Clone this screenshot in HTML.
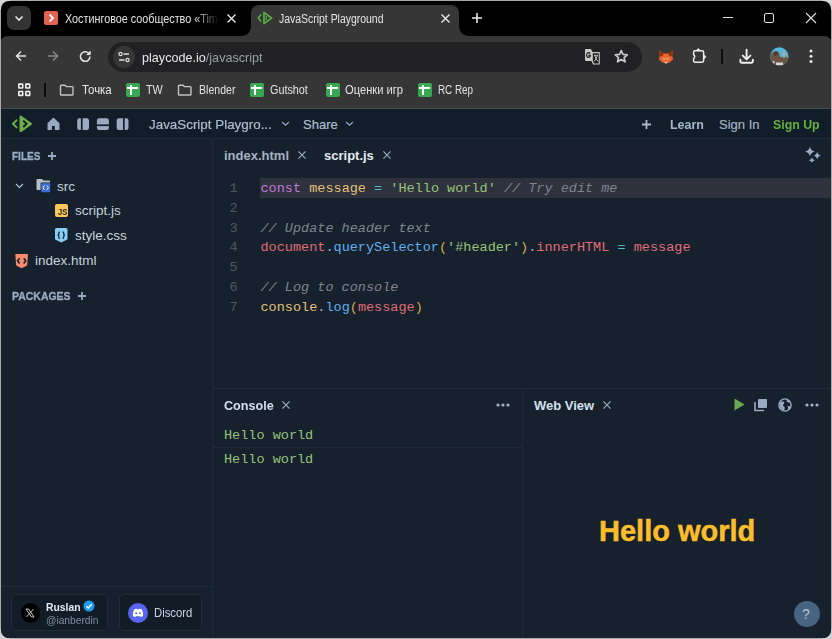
<!DOCTYPE html>
<html><head><meta charset="utf-8">
<style>
*{margin:0;padding:0;box-sizing:border-box}
html,body{width:832px;height:639px;overflow:hidden;background:#a9a9a9;font-family:"Liberation Sans",sans-serif}
.a{position:absolute}
#win{position:absolute;left:0;top:0;width:832px;height:639px;clip-path:inset(1px 1px 1px 1px round 8px);background:#000}
.t{position:absolute;white-space:nowrap;line-height:1}
svg{position:absolute;overflow:visible}
</style></head><body>
<div class="a" style="left:0;top:0;width:10px;height:10px;background:#d6d6d6"></div><div class="a" style="right:0;top:0;width:10px;height:10px;background:#d6d6d6"></div><div class="a" style="left:0;bottom:0;width:10px;height:10px;background:#d0d0d0"></div><div class="a" style="right:0;bottom:0;width:10px;height:10px;background:#d0d0d0"></div>
<div id="win">
  <!-- TAB STRIP -->
  <div class="a" style="left:7px;top:6px;width:24px;height:24px;border-radius:7px;background:#333"></div>
  <svg style="left:14px;top:14px" width="10" height="8" viewBox="0 0 10 8"><path d="M1.5 2.5 L5 6 L8.5 2.5" fill="none" stroke="#e8e8e8" stroke-width="1.6"/></svg>
  <!-- tab 1 -->
  <div class="a" style="left:44px;top:11px;width:14px;height:14px;background:#e2624f;border-radius:2px"></div>
  <svg style="left:44px;top:11px" width="14" height="14" viewBox="0 0 14 14"><path d="M5.5 3.5 L9 7 L5.5 10.5" fill="none" stroke="#fff" stroke-width="1.8"/></svg>
  <div class="a" style="left:65px;top:10px;width:154px;height:18px;overflow:hidden;-webkit-mask-image:linear-gradient(90deg,#000 84%,transparent)"><div class="t" style="left:0;top:3px;font-size:12px;color:#e3e3e3;transform:scaleX(.9);transform-origin:0 0">Хостинговое сообщество «Timeweb»</div></div>
  <svg style="left:227px;top:14px" width="9" height="9" viewBox="0 0 9 9"><path d="M0.5 0.5 L8.5 8.5 M8.5 0.5 L0.5 8.5" stroke="#e8e8e8" stroke-width="1.4"/></svg>
  <!-- active tab -->
  <div class="a" style="left:251px;top:5px;width:208px;height:32px;background:#363636;border-radius:8px 8px 0 0"></div>
  <div class="a" style="left:242px;top:27px;width:9px;height:9px;background:radial-gradient(circle at 0 0,#000 8.5px,#363636 9px)"></div>
  <div class="a" style="left:459px;top:27px;width:9px;height:9px;background:radial-gradient(circle at 100% 0,#000 8.5px,#363636 9px)"></div>
  <svg style="left:257px;top:11px" width="16" height="14" viewBox="0 0 16 14"><path d="M4.2 3.5 L1.2 7 L4.2 10.5" fill="none" stroke="#5aa845" stroke-width="1.7"/><path d="M7 1.5 L7 12.5 L14.5 7 Z" fill="none" stroke="#5aa845" stroke-width="1.8" stroke-linejoin="round"/><path d="M9.5 5 L9 9" stroke="#5aa845" stroke-width="1.2"/></svg>
  <div class="t" style="left:279px;top:13px;font-size:12px;color:#e3e3e3;transform:scaleX(.87);transform-origin:0 0">JavaScript Playground</div>
  <svg style="left:441px;top:14px" width="9" height="9" viewBox="0 0 9 9"><path d="M0.5 0.5 L8.5 8.5 M8.5 0.5 L0.5 8.5" stroke="#e8e8e8" stroke-width="1.4"/></svg>
  <svg style="left:471px;top:12px" width="12" height="12" viewBox="0 0 12 12"><path d="M6 1 V11 M1 6 H11" stroke="#e8e8e8" stroke-width="1.6"/></svg>
  <!-- window controls -->
  <div class="a" style="left:723px;top:17px;width:10px;height:1px;background:#e0e0e0"></div>
  <div class="a" style="left:764px;top:13px;width:10px;height:10px;border:1px solid #e0e0e0;border-radius:2px"></div>
  <svg style="left:806px;top:13px" width="10" height="10" viewBox="0 0 10 10"><path d="M0 0 L10 10 M10 0 L0 10" stroke="#e0e0e0" stroke-width="1.1"/></svg>

  <!-- TOOLBAR -->
  <div class="a" style="left:0;top:36px;width:832px;height:72px;background:#363636;border-radius:8px 8px 0 0"></div>
  <svg style="left:15px;top:50px" width="12" height="12" viewBox="0 0 12 12"><path d="M11 6 H1.5 M6 1.5 L1.5 6 L6 10.5" fill="none" stroke="#e3e3e3" stroke-width="1.5"/></svg>
  <svg style="left:47px;top:50px" width="12" height="12" viewBox="0 0 12 12"><path d="M1 6 H10.5 M6 1.5 L10.5 6 L6 10.5" fill="none" stroke="#8a8a8a" stroke-width="1.5"/></svg>
  <svg style="left:79px;top:50px" width="13" height="13" viewBox="0 0 13 13"><path d="M11 6.5 A4.8 4.8 0 1 1 9.5 3" fill="none" stroke="#e3e3e3" stroke-width="1.6"/><path d="M11.2 1 V4.6 H7.6" fill="#e3e3e3" stroke="#e3e3e3" stroke-width="1"/></svg>
  <div class="a" style="left:108px;top:42px;width:534px;height:30px;border-radius:15px;background:#212124"></div>
  <div class="a" style="left:113px;top:45.6px;width:22px;height:22px;border-radius:11px;background:#363636"></div>
  <svg style="left:118px;top:51px" width="12" height="12" viewBox="0 0 12 12"><circle cx="2.5" cy="3" r="1.6" fill="none" stroke="#e3e3e3" stroke-width="1.2"/><path d="M5.5 3 H11" stroke="#e3e3e3" stroke-width="1.3"/><circle cx="9.5" cy="9" r="1.6" fill="none" stroke="#e3e3e3" stroke-width="1.2"/><path d="M1 9 H6.5" stroke="#e3e3e3" stroke-width="1.3"/></svg>
  <div class="t" style="left:142px;top:51px;font-size:13px;color:#e8e8e8;transform:scaleX(.97);transform-origin:0 0">playcode.io<span style="color:#9aa0a6">/javascript</span></div>


  <svg style="left:584px;top:48px" width="17" height="17" viewBox="584 48 17 17"><path d="M592.1 52.6 H599.3 V64 H593.6 L592.1 60.9 Z" fill="#1c1c1f" stroke="#c4c4c4" stroke-width="1.1" stroke-linejoin="round"/><path d="M585.8 49 H590.4 Q591 49 591.3 49.6 L592.6 52.6 V60.9 L594 64.3 H593.2 L591.8 60.9 H585.8 Q585 60.9 585 60.1 V49.8 Q585 49 585.8 49 Z" fill="#c8c8c8"/><path d="M590.2 53.6 Q589.5 52.6 588.4 52.7 Q586.6 53 586.6 55 Q586.6 57.2 588.4 57.3 Q590.3 57.3 590.3 55.3 H588.5" fill="none" stroke="#1c1c1f" stroke-width="1.2"/><path d="M594 55.3 H598 M594.6 55.5 Q596 59.5 598.2 61.5 M597.4 55.5 Q596.5 59 594.2 61.5" fill="none" stroke="#c4c4c4" stroke-width="1"/></svg>
  <svg style="left:613.5px;top:49.3px" width="15" height="15" viewBox="0 0 15 15"><path d="M7.3 1.5 L9 5.4 L13.3 5.8 L10.1 8.6 L11.1 12.8 L7.3 10.6 L3.5 12.8 L4.5 8.6 L1.3 5.8 L5.6 5.4 Z" fill="none" stroke="#c8c8c8" stroke-width="1.7" stroke-linejoin="round"/></svg>
  <svg style="left:658px;top:50px" width="16" height="14" viewBox="0 0 16 14"><path d="M1 0.5 L6 3.6 H10 L15 0.5 L14.2 6 L15.2 9.2 L11.5 12.6 L8 13.6 L4.5 12.6 L0.8 9.2 L1.8 6 Z" fill="#e8642c"/><path d="M1 0.5 L6 3.6 L4.2 6.6 L1.8 6Z M15 0.5 L10 3.6 L11.8 6.6 L14.2 6Z" fill="#9a2f0c"/><path d="M4.2 6.6 L6.5 8 L8 7 L9.5 8 L11.8 6.6 L11 10 H5Z" fill="#f08a50"/><path d="M6 11.6 L8 13.8 L10 11.6 L8 12.2Z" fill="#e8e0da"/></svg>
  <svg style="left:690px;top:46px" width="18" height="18" viewBox="690 46 18 18"><path d="M695 50.8 H702.2 Q703.6 50.8 703.6 52.2 V60.8 Q703.6 62.2 702.2 62.2 H695 Q693.6 62.2 693.6 60.8 V58.6 Q695.8 56.6 693.6 54.6 V52.2 Q693.6 50.8 695 50.8 Z" fill="none" stroke="#ececec" stroke-width="1.5" stroke-linejoin="round"/><path d="M696.2 50.6 L698.3 48.6 L700.4 50.6Z M703.8 54.7 L705.9 56.8 L703.8 58.9Z" fill="#ececec" stroke="#ececec" stroke-width="0.8" stroke-linejoin="round"/></svg>
  <div class="a" style="left:721px;top:49px;width:2px;height:15px;background:#0c0c0c"></div>
  <svg style="left:736px;top:46px" width="21" height="20" viewBox="736 46 21 20"><path d="M746.6 49.6 V59.3 M742.8 55.6 L746.6 59.4 L750.4 55.6" fill="none" stroke="#f0f0f0" stroke-width="1.9" stroke-linecap="round" stroke-linejoin="round"/><path d="M740.4 59.6 V61.6 Q740.4 62.7 741.5 62.7 H751.7 Q752.8 62.7 752.8 61.6 V59.6" fill="none" stroke="#f0f0f0" stroke-width="1.9" stroke-linecap="round"/></svg>
  <svg style="left:769.6px;top:47.2px" width="19" height="19" viewBox="0 0 19 19"><defs><clipPath id="av"><circle cx="9.4" cy="9.4" r="9.2"/></clipPath></defs><g clip-path="url(#av)"><rect width="19" height="19" fill="#4fb8df"/><path d="M2 6 Q4 3.5 7 4 Q9 4.5 9.5 7 L10 10 Q12 9 13 11 L15 9 Q17 10 19 12 V19 H0 V9 Q1 7 2 6Z" fill="#6b5444"/><path d="M4 5 Q6 4 8 6 Q7 9 5 9 Q3 8 4 5Z" fill="#4a382e"/><path d="M13 4 Q15 4 15.5 7 Q16 10 14 11 Q12.5 9 13 4Z" fill="#b8a590"/><path d="M6 15.5 H13 V18 H6Z" fill="#d8d8dc"/><path d="M2.5 14 Q4 13 5 15 L4 17 Q2.5 16.5 2.5 14Z" fill="#c8c4c0"/></g></svg>
  <svg style="left:809px;top:49px" width="4" height="15" viewBox="0 0 4 15"><g fill="#e3e3e3"><circle cx="2" cy="2" r="1.5"/><circle cx="2" cy="7.3" r="1.5"/><circle cx="2" cy="12.5" r="1.5"/></g></svg>
  <!-- BOOKMARKS -->
  <svg style="left:16px;top:82px" width="16" height="16" viewBox="16 82 16 16"><g fill="none" stroke="#f0f0f0" stroke-width="1.6"><rect x="18.8" y="84.1" width="3.9" height="3.9" rx=".4"/><rect x="25.8" y="84.1" width="3.9" height="3.9" rx=".4"/><rect x="18.8" y="91.5" width="3.9" height="3.9" rx=".4"/><rect x="25.8" y="91.5" width="3.9" height="3.9" rx=".4"/></g></svg>
  <div class="a" style="left:44px;top:83px;width:2px;height:14px;background:#0a0a0a"></div>
  <svg style="left:59px;top:84px" width="16" height="12" viewBox="0 0 16 12"><path d="M1.5 2 Q1.5 1.2 2.3 1.2 H6 L7.4 2.6 H13.2 Q14 2.6 14 3.4 V10.2 Q14 11 13.2 11 H2.3 Q1.5 11 1.5 10.2 Z" fill="none" stroke="#c4c4c4" stroke-width="1.4" stroke-linejoin="round"/></svg>
  <div class="t" style="left:81.6px;top:84px;font-size:12px;color:#e8e8e8;transform:scaleX(.95);transform-origin:0 0">Точка</div>
  <div class="a" style="left:126px;top:83px;width:14px;height:14px;background:#38a853;border-radius:2px"></div><div class="a" style="left:130px;top:84.6px;width:2px;height:10.4px;background:#fff"></div><div class="a" style="left:127px;top:87px;width:11px;height:2px;background:#fff"></div>
  <div class="t" style="left:145.5px;top:84px;font-size:12px;color:#e3e3e3;transform:scaleX(.9);transform-origin:0 0">TW</div>
  <svg style="left:177px;top:84px" width="16" height="12" viewBox="0 0 16 12"><path d="M1.5 2 Q1.5 1.2 2.3 1.2 H6 L7.4 2.6 H13.2 Q14 2.6 14 3.4 V10.2 Q14 11 13.2 11 H2.3 Q1.5 11 1.5 10.2 Z" fill="none" stroke="#c4c4c4" stroke-width="1.4" stroke-linejoin="round"/></svg>
  <div class="t" style="left:199px;top:84px;font-size:12px;color:#e3e3e3;transform:scaleX(.88);transform-origin:0 0">Blender</div>
  <div class="a" style="left:250px;top:83px;width:14px;height:14px;background:#38a853;border-radius:2px"></div><div class="a" style="left:254px;top:84.6px;width:2px;height:10.4px;background:#fff"></div><div class="a" style="left:251px;top:87px;width:11px;height:2px;background:#fff"></div>
  <div class="t" style="left:270px;top:84px;font-size:12px;color:#e3e3e3;transform:scaleX(.9);transform-origin:0 0">Gutshot</div>
  <div class="a" style="left:326px;top:83px;width:14px;height:14px;background:#38a853;border-radius:2px"></div><div class="a" style="left:330px;top:84.6px;width:2px;height:10.4px;background:#fff"></div><div class="a" style="left:327px;top:87px;width:11px;height:2px;background:#fff"></div>
  <div class="t" style="left:345px;top:84px;font-size:12px;color:#e3e3e3;transform:scaleX(.93);transform-origin:0 0">Оценки игр</div>
  <div class="a" style="left:418px;top:83px;width:14px;height:14px;background:#38a853;border-radius:2px"></div><div class="a" style="left:422px;top:84.6px;width:2px;height:10.4px;background:#fff"></div><div class="a" style="left:419px;top:87px;width:11px;height:2px;background:#fff"></div>
  <div class="t" style="left:438px;top:84px;font-size:12px;color:#e3e3e3;transform:scaleX(.82);transform-origin:0 0">RC Rep</div>

  <!-- APP -->
  <div class="a" style="left:0;top:108px;width:832px;height:1px;background:#4a4a4a"></div>
  <div class="a" style="left:0;top:109px;width:832px;height:530px;background:#16212d"></div>
  <div class="a" style="left:0;top:109px;width:832px;height:29px;background:#111d28"></div>
  <div class="a" style="left:0;top:138px;width:832px;height:1px;background:#1f2b39"></div>
  <div class="a" style="left:212px;top:139px;width:1px;height:500px;background:#1f2b39"></div>
  <!-- header -->
  <svg style="left:11px;top:115px" width="22" height="18" viewBox="0 0 22 18"><path d="M5.6 5.2 L1.9 8.8 L5.6 12.4" fill="none" stroke="#6cb04b" stroke-width="2" stroke-linecap="round" stroke-linejoin="round"/><path d="M9.6 1.6 L9.6 16 L19.9 8.8 Z" fill="#6cb04b" stroke="#6cb04b" stroke-width="2.2" stroke-linejoin="round"/><path d="M12.2 5.6 L15.6 8.8 L12.2 12" fill="none" stroke="#111d28" stroke-width="1.9" stroke-linejoin="miter"/></svg>
  <svg style="left:47px;top:117px" width="13" height="14" viewBox="0 0 13 14"><path d="M1.2 6.5 L6.5 1.6 L11.8 6.5 V12.4 H8.5 V8.2 H4.2 V12.4 H1.2 Z" fill="#9aaac2" stroke="#9aaac2" stroke-width="1.4" stroke-linejoin="round"/></svg>
  <svg style="left:77px;top:117.5px" width="52" height="12" viewBox="0 0 52 12"><g fill="#9aaac2"><rect x="0.2" y="0.2" width="11.8" height="11.8" rx="2.2"/><rect x="19.9" y="0.2" width="12" height="11.8" rx="2.2"/><rect x="39.7" y="0.2" width="11.8" height="11.8" rx="2.2"/></g><g fill="#111d28"><rect x="3.9" y="0" width="1.7" height="12"/><rect x="19.5" y="6.4" width="13" height="1.7"/><rect x="46" y="0" width="1.7" height="12"/></g></svg>
  <div class="t" style="left:148.5px;top:117.5px;font-size:13px;color:#adbcd0;-webkit-text-stroke:.2px #adbcd0;transform:scaleX(1.03);transform-origin:0 0">JavaScript Playgro...</div>
  <svg style="left:280.5px;top:121px" width="9" height="6" viewBox="0 0 9 6"><path d="M1 1 L4.5 4.2 L8 1" fill="none" stroke="#98a8c0" stroke-width="1.15"/></svg>
  <div class="t" style="left:303px;top:117.5px;font-size:13px;color:#adbcd0;-webkit-text-stroke:.2px #adbcd0">Share</div>
  <svg style="left:344.5px;top:121px" width="9" height="6" viewBox="0 0 9 6"><path d="M1 1 L4.5 4.2 L8 1" fill="none" stroke="#98a8c0" stroke-width="1.15"/></svg>
  <svg style="left:642px;top:119.5px" width="9" height="9" viewBox="0 0 9 9"><path d="M4.5 0 V9 M0 4.5 H9" stroke="#a8b8cc" stroke-width="1.8"/></svg>
  <div class="t" style="left:670px;top:117.5px;font-size:13px;font-weight:bold;color:#a8b8cc;transform:scaleX(.96);transform-origin:0 0">Learn</div>
  <div class="t" style="left:719px;top:117.5px;font-size:13px;color:#a3b0c3;-webkit-text-stroke:.2px #a3b0c3">Sign In</div>
  <div class="t" style="left:773px;top:117.5px;font-size:13px;font-weight:bold;color:#66b140;transform:scaleX(.95);transform-origin:0 0">Sign Up</div>
  <!-- sidebar -->
  <div class="t" style="left:12px;top:151px;font-size:11.5px;font-weight:bold;color:#9aabc3;-webkit-text-stroke:.3px #9aabc3;transform:scaleX(.87);transform-origin:0 0">FILES</div>
  <svg style="left:47.5px;top:152px" width="8" height="8" viewBox="0 0 8 8"><path d="M4 0 V8 M0 4 H8" stroke="#9aabc3" stroke-width="1.8"/></svg>
  <svg style="left:14.5px;top:182.8px" width="9" height="6" viewBox="0 0 9 6"><path d="M1 1 L4.5 4.5 L8 1" fill="none" stroke="#b4bfcd" stroke-width="1.2"/></svg>
  <svg style="left:36px;top:178px" width="15" height="15" viewBox="36 178 15 15"><path d="M36.5 180 Q36.5 179 37.5 179 H42 L43.5 180.6 H49 Q50 180.6 50 181.6 V189 Q50 190 49 190 H37.5 Q36.5 190 36.5 189 Z" fill="#b9bdc5"/><rect x="40.6" y="182.6" width="10" height="9.8" rx="1.2" fill="#16212d"/><rect x="41.2" y="183.2" width="9" height="9" rx="1" fill="#3b6fd6"/><path d="M44.4 185.6 L43 187.7 L44.4 189.8 M47 185.6 L48.4 187.7 L47 189.8" fill="none" stroke="#fff" stroke-width="1"/></svg>
  <div class="t" style="left:57px;top:179.7px;font-size:13.5px;color:#c8d2df">src</div>
  <div class="a" style="left:55px;top:204px;width:12.8px;height:12.8px;background:#f8c85c;border-radius:2px"></div>
  <div class="t" style="left:57.8px;top:208.3px;font-size:8.5px;font-weight:bold;color:#2a2418;transform:scaleX(.9);transform-origin:0 0">JS</div>
  <div class="t" style="left:75px;top:203.7px;font-size:13.5px;color:#c8d2df">script.js</div>
  <svg style="left:55px;top:227.7px" width="13" height="15" viewBox="0 0 13 15"><path d="M0 1.5 Q0 0 1.5 0 H11 Q12.5 0 12.5 1.5 V10.5 Q12.5 11.3 11.8 11.7 L6.25 14.4 L0.7 11.7 Q0 11.3 0 10.5 Z" fill="#88cff5"/><path d="M5 3.8 Q3.8 3.8 3.8 5 V6.3 L3 7.1 L3.8 7.9 V9.2 Q3.8 10.4 5 10.4 M7.5 3.8 Q8.7 3.8 8.7 5 V6.3 L9.5 7.1 L8.7 7.9 V9.2 Q8.7 10.4 7.5 10.4" fill="none" stroke="#15303f" stroke-width="1.3"/></svg>
  <div class="t" style="left:75px;top:228.7px;font-size:13.5px;color:#c8d2df">style.css</div>
  <svg style="left:15px;top:254px" width="14" height="15" viewBox="0 0 14 15"><path d="M0.3 0.6 Q0.3 0 1 0 H12.3 Q13 0 13 0.6 L12.2 10.8 Q12.1 11.4 11.6 11.7 L6.65 14.3 L1.7 11.7 Q1.2 11.4 1.1 10.8 Z" fill="#f58b6c"/><path d="M4.6 4.2 L2.6 6.8 L4.6 9.4 M8.7 4.2 L10.7 6.8 L8.7 9.4" fill="none" stroke="#1b1f26" stroke-width="1.6"/></svg>
  <div class="t" style="left:35px;top:253.7px;font-size:13.5px;color:#c8d2df">index.html</div>
  <div class="t" style="left:12px;top:291px;font-size:11.5px;font-weight:bold;color:#9aabc3;-webkit-text-stroke:.3px #9aabc3;transform:scaleX(.91);transform-origin:0 0">PACKAGES</div>
  <svg style="left:78px;top:292px" width="8" height="8" viewBox="0 0 8 8"><path d="M4 0 V8 M0 4 H8" stroke="#9aabc3" stroke-width="1.8"/></svg>
  <div class="a" style="left:0;top:586px;width:212px;height:1px;background:#1f2b39"></div>
  <div class="a" style="left:11px;top:594px;width:97px;height:37px;border:1px solid #212d3b;border-radius:5px;background:#121c27"></div>
  <div class="a" style="left:20.5px;top:603px;width:19.5px;height:19.5px;border-radius:10px;background:#000"></div>
  <svg style="left:25px;top:608px" width="10" height="10" viewBox="0 0 10 10"><path d="M1 1 H3.5 L9 9 H6.5 Z" fill="none" stroke="#ddd" stroke-width="0.9"/><path d="M8.5 1 L1.5 9" stroke="#ddd" stroke-width="0.9"/></svg>
  <div class="t" style="left:45.5px;top:601.5px;font-size:11px;font-weight:bold;color:#e6ebf2;transform:scaleX(.94);transform-origin:0 0">Ruslan</div>
  <svg style="left:83px;top:600px" width="12" height="12" viewBox="0 0 12 12"><circle cx="6" cy="6" r="5.5" fill="#1d9bf0"/><path d="M3.3 6.2 L5.2 8 L8.7 4.2" fill="none" stroke="#fff" stroke-width="1.4"/></svg>
  <div class="t" style="left:45.5px;top:614.5px;font-size:11px;color:#7e8da3;transform:scaleX(.93);transform-origin:0 0">@ianberdin</div>
  <div class="a" style="left:119px;top:594px;width:83px;height:37px;border:1px solid #212d3b;border-radius:5px;background:#121c27"></div>
  <div class="a" style="left:128px;top:603px;width:20px;height:20px;border-radius:10px;background:#5865f2"></div>
  <svg style="left:132px;top:608px" width="12" height="10" viewBox="0 0 12 10"><path d="M2 1.5 Q4 0.5 5 1 L6 1.5 L7 1 Q8 0.5 10 1.5 Q11.5 4.5 11 8 Q9.5 9.2 8.5 9 L8 8 Q6 8.6 4 8 L3.5 9 Q2.5 9.2 1 8 Q0.5 4.5 2 1.5 Z" fill="#fff"/><circle cx="4.2" cy="5.3" r="1" fill="#5865f2"/><circle cx="7.8" cy="5.3" r="1" fill="#5865f2"/></svg>
  <div class="t" style="left:154px;top:606px;font-size:13px;color:#c8d2df;transform:scaleX(.87);transform-origin:0 0">Discord</div>
  <!-- editor tabs -->
  <div class="t" style="left:224px;top:149px;font-size:13px;font-weight:bold;color:#a3b1c4">index.html</div>
  <svg style="left:297.5px;top:151.2px" width="8" height="8" viewBox="0 0 8 8"><path d="M0.4 0.4 L7.6 7.6 M7.6 0.4 L0.4 7.6" stroke="#9aa8bc" stroke-width="1.2"/></svg>
  <div class="t" style="left:324px;top:149px;font-size:13px;font-weight:bold;color:#e4eaf2">script.js</div>
  <svg style="left:382.5px;top:151.2px" width="8" height="8" viewBox="0 0 8 8"><path d="M0.4 0.4 L7.6 7.6 M7.6 0.4 L0.4 7.6" stroke="#9aa8bc" stroke-width="1.2"/></svg>
  <svg style="left:800px;top:143px" width="24" height="22" viewBox="0 0 24 22"><path d="M9.950000000000045 3.7 Q10.850000000000046 7.6 14.850000000000046 8.5 Q10.850000000000046 9.4 9.950000000000045 13.3 Q9.050000000000045 9.4 5.050000000000045 8.5 Q9.050000000000045 7.6 9.950000000000045 3.7ZM17.200000000000045 8.699999999999994 Q17.900000000000045 11.899999999999995 21.100000000000044 12.599999999999994 Q17.900000000000045 13.299999999999994 17.200000000000045 16.499999999999993 Q16.500000000000046 13.299999999999994 13.300000000000045 12.599999999999994 Q16.500000000000046 11.899999999999995 17.200000000000045 8.699999999999994ZM11.899999999999977 14.599999999999989 Q12.449999999999978 16.649999999999988 14.899999999999977 17.19999999999999 Q12.449999999999978 17.74999999999999 11.899999999999977 19.79999999999999 Q11.349999999999977 17.74999999999999 8.899999999999977 17.19999999999999 Q11.349999999999977 16.649999999999988 11.899999999999977 14.599999999999989Z" fill="#9aaac2"/></svg>
  <!-- code -->
  <div class="a" style="left:260px;top:178px;width:572px;height:19.8px;background:#2d323c"></div>
  <div id="code" class="a" style="left:-0.5px;top:179px;font-family:'Liberation Mono',monospace;font-size:13.52px;line-height:19.77px;white-space:pre"><div style="position:relative;height:19.77px"><span style="position:absolute;left:230px;color:#4f5866">1</span><span style="position:absolute;left:261px"><span style="color:#c678dd">const</span> <span style="color:#e5c07b">message</span> <span style="color:#56b6c2">=</span> <span style="color:#98c379">'Hello world'</span> <span style="color:#7f848e;font-style:italic">// Try edit me</span></span></div><div style="position:relative;height:19.77px"><span style="position:absolute;left:230px;color:#4f5866">2</span><span style="position:absolute;left:261px"></span></div><div style="position:relative;height:19.77px"><span style="position:absolute;left:230px;color:#4f5866">3</span><span style="position:absolute;left:261px"><span style="color:#7f848e;font-style:italic">// Update header text</span></span></div><div style="position:relative;height:19.77px"><span style="position:absolute;left:230px;color:#4f5866">4</span><span style="position:absolute;left:261px"><span style="color:#e06c75">document</span><span style="color:#abb2bf">.</span><span style="color:#61afef">querySelector</span><span style="color:#d4a94c">(</span><span style="color:#98c379">'#header'</span><span style="color:#d4a94c">)</span><span style="color:#abb2bf">.</span><span style="color:#e06c75">innerHTML</span> <span style="color:#56b6c2">=</span> <span style="color:#e06c75">message</span></span></div><div style="position:relative;height:19.77px"><span style="position:absolute;left:230px;color:#4f5866">5</span><span style="position:absolute;left:261px"></span></div><div style="position:relative;height:19.77px"><span style="position:absolute;left:230px;color:#4f5866">6</span><span style="position:absolute;left:261px"><span style="color:#7f848e;font-style:italic">// Log to console</span></span></div><div style="position:relative;height:19.77px"><span style="position:absolute;left:230px;color:#4f5866">7</span><span style="position:absolute;left:261px"><span style="color:#e5c07b">console</span><span style="color:#abb2bf">.</span><span style="color:#61afef">log</span><span style="color:#d4a94c">(</span><span style="color:#e06c75">message</span><span style="color:#d4a94c">)</span></span></div></div>
  <!-- panels -->
  <div class="a" style="left:213px;top:388px;width:619px;height:1px;background:#1f2b39"></div>
  <div class="a" style="left:522px;top:389px;width:1px;height:250px;background:#1f2b39"></div>
  <div class="t" style="left:224px;top:399px;font-size:13px;font-weight:bold;color:#d3e0ee;transform:scaleX(.97);transform-origin:0 0">Console</div>
  <svg style="left:282px;top:401px" width="8" height="8" viewBox="0 0 8 8"><path d="M0.4 0.4 L7.6 7.6 M7.6 0.4 L0.4 7.6" stroke="#9aa8bc" stroke-width="1.2"/></svg>
  <svg style="left:496px;top:403px" width="14" height="4" viewBox="0 0 14 4"><g fill="#a4b3ca"><circle cx="2" cy="2" r="1.6"/><circle cx="7" cy="2" r="1.6"/><circle cx="12" cy="2" r="1.6"/></g></svg>
  <div class="t" style="left:224px;top:429px;font-family:'Liberation Mono',monospace;font-size:13.52px;color:#98c379">Hello world</div>
  <div class="a" style="left:213px;top:447px;width:309px;height:1px;background:#1f2b39"></div>
  <div class="t" style="left:224px;top:453px;font-family:'Liberation Mono',monospace;font-size:13.52px;color:#98c379">Hello world</div>
  <div class="t" style="left:534px;top:399px;font-size:13px;font-weight:bold;color:#d3e0ee">Web View</div>
  <svg style="left:603px;top:401px" width="8" height="8" viewBox="0 0 8 8"><path d="M0.4 0.4 L7.6 7.6 M7.6 0.4 L0.4 7.6" stroke="#9aa8bc" stroke-width="1.2"/></svg>
  <svg style="left:734px;top:398px" width="11" height="13" viewBox="0 0 11 13"><path d="M0.5 0.5 L10.5 6.5 L0.5 12.5 Z" fill="#6aa84f"/></svg>
  <svg style="left:754px;top:398px" width="14" height="14" viewBox="0 0 14 14"><path d="M1 4 V12.5 H10" fill="none" stroke="#9aaac2" stroke-width="1.6"/><rect x="4" y="1" width="9" height="9" rx="1" fill="#9aaac2"/></svg>
  <svg style="left:778px;top:398px" width="14" height="14" viewBox="0 0 14 14"><circle cx="7" cy="7" r="6.1" fill="none" stroke="#9aaac2" stroke-width="1.4"/><path d="M2.2 4.2 Q4 3 5.5 3.6 Q6.8 4.6 5.8 6 Q4.6 6.5 5.2 8 Q6.6 8.6 6.8 10 L6.2 12.8 Q3.4 12 2 9 Q1.4 6.4 2.2 4.2 Z" fill="#9aaac2"/><path d="M8.2 1.2 Q9.6 2.6 8.6 3.8 Q10 5 12.6 4.4 Q11.6 2 8.2 1.2 Z" fill="#9aaac2"/><path d="M9.5 8 Q11.2 7.6 12.6 8.6 Q11.8 11 9.8 12 Q10.4 10 9.5 8 Z" fill="#9aaac2"/></svg>
  <svg style="left:805px;top:403px" width="14" height="4" viewBox="0 0 14 4"><g fill="#a4b3ca"><circle cx="2" cy="2" r="1.6"/><circle cx="7" cy="2" r="1.6"/><circle cx="12" cy="2" r="1.6"/></g></svg>
  <div class="t" style="left:599px;top:517px;font-size:29px;font-weight:bold;color:#fbbd2a;-webkit-text-stroke:.5px #fbbd2a">Hello world</div>
  <div class="a" style="left:794px;top:601px;width:26px;height:26px;border-radius:13px;background:#466382"></div>
  <div class="t" style="left:802px;top:607px;font-size:14px;color:#b8c6d6">?</div>
</div>
</body></html>
